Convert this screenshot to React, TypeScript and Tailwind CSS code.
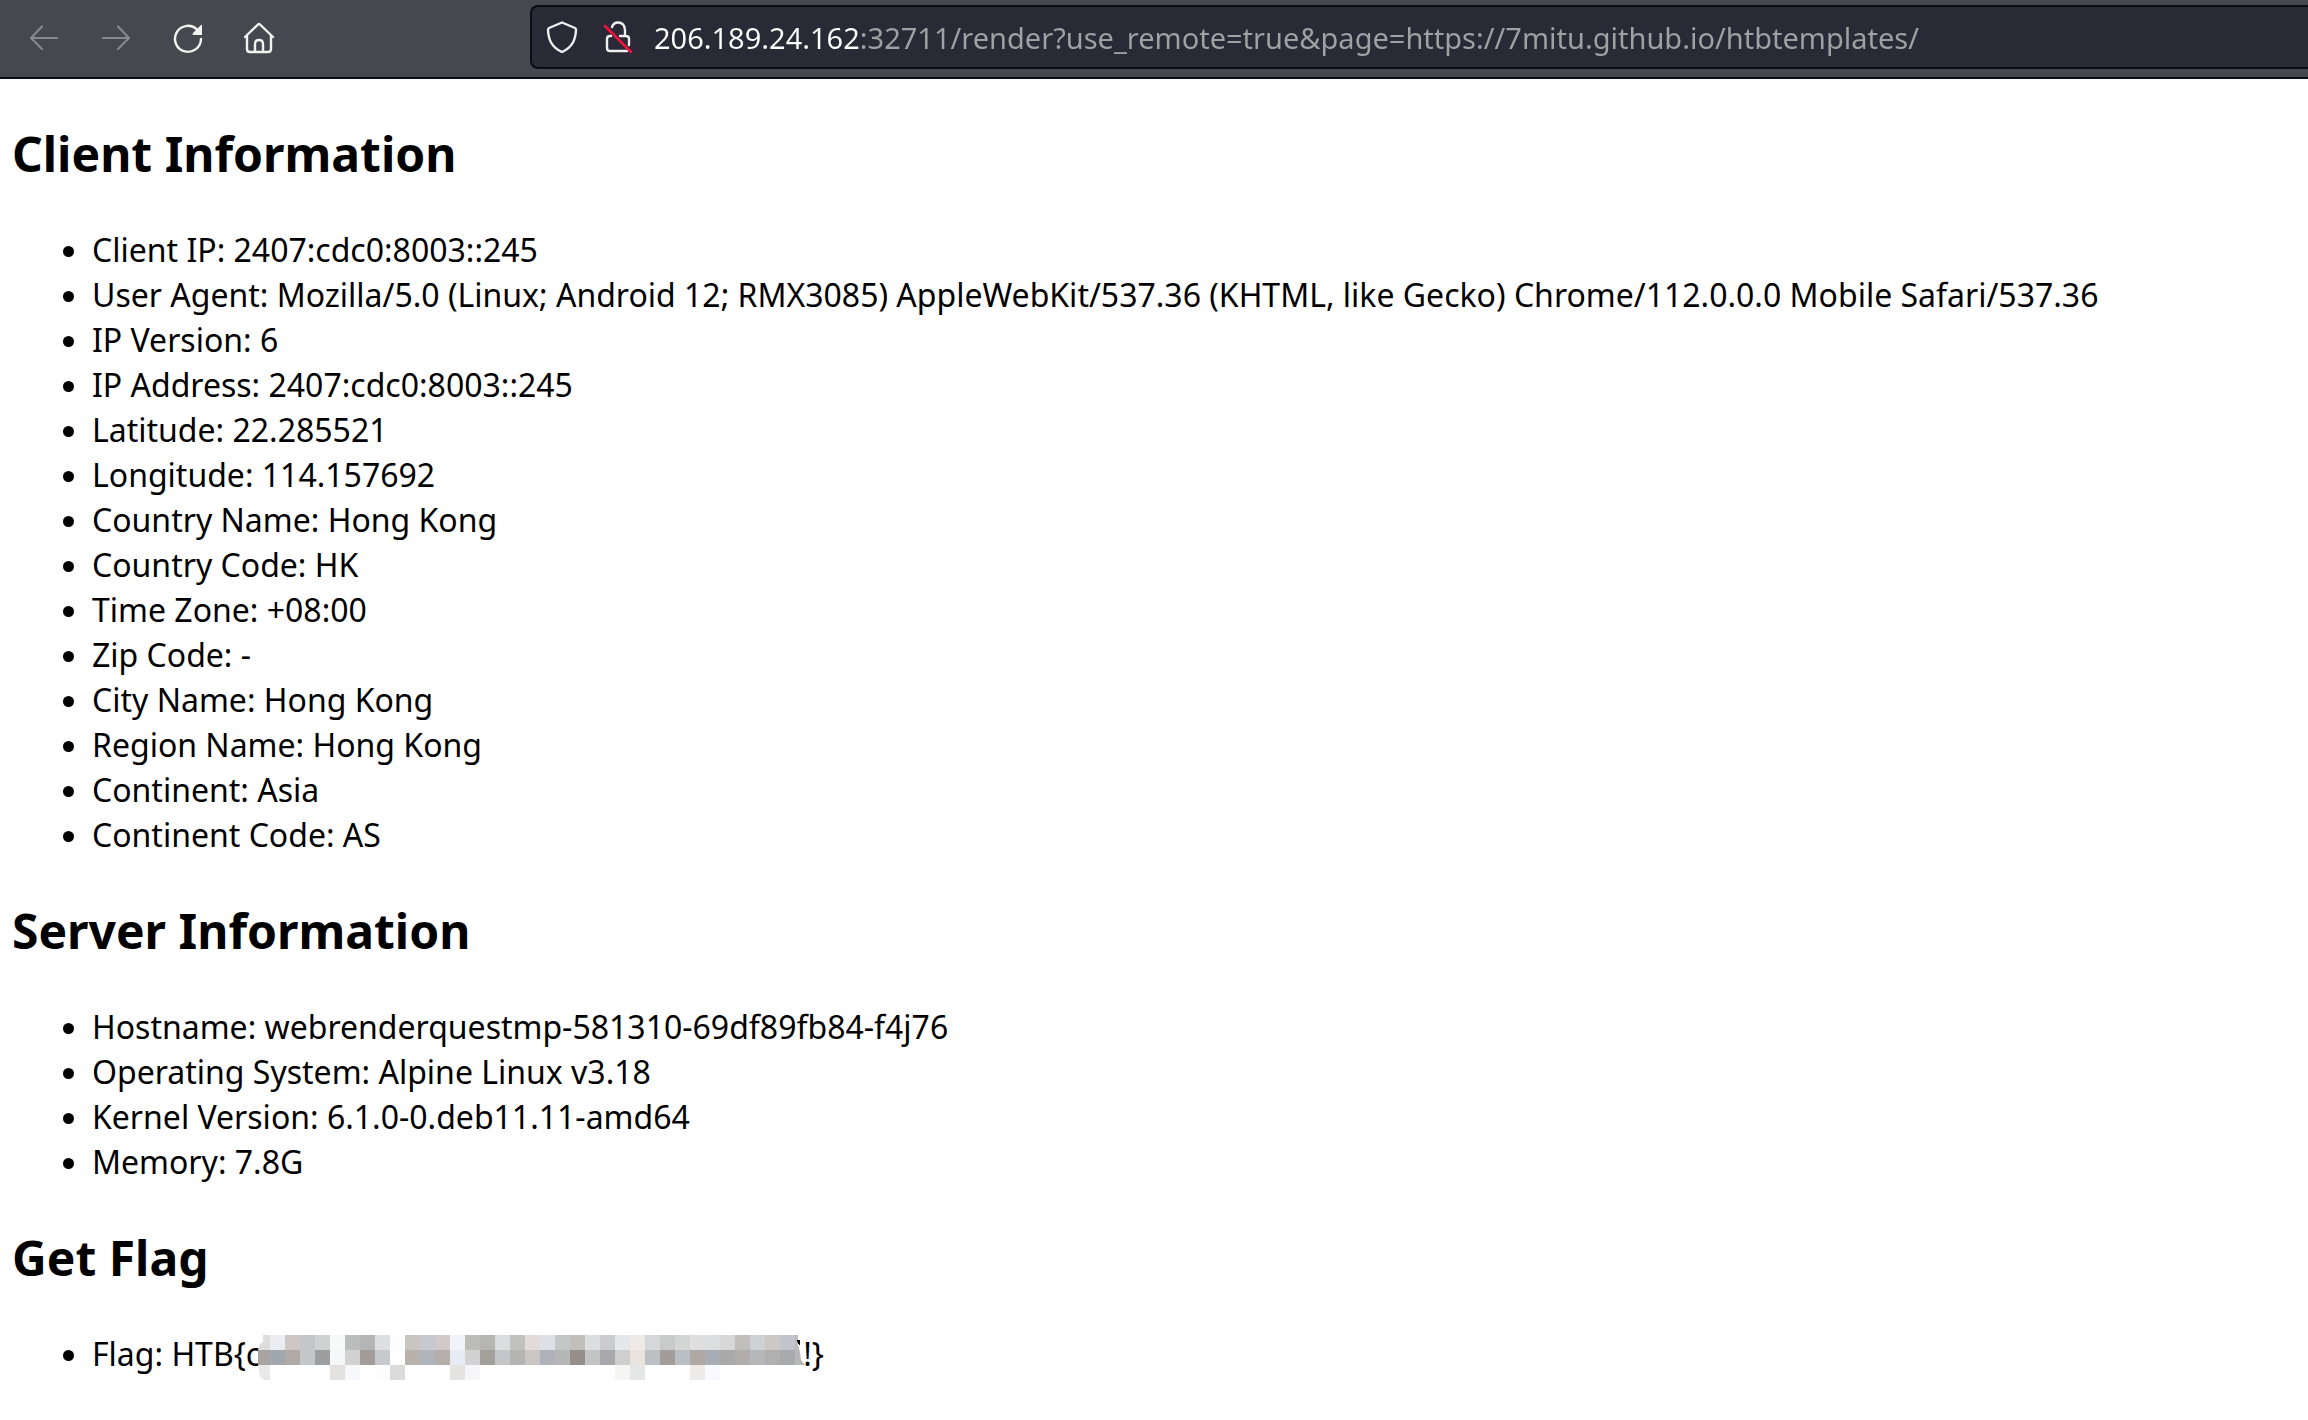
import React from "react";

const clientInfo = [
  "Client IP: 2407:cdc0:8003::245",
  "User Agent: Mozilla/5.0 (Linux; Android 12; RMX3085) AppleWebKit/537.36 (KHTML, like Gecko) Chrome/112.0.0.0 Mobile Safari/537.36",
  "IP Version: 6",
  "IP Address: 2407:cdc0:8003::245",
  "Latitude: 22.285521",
  "Longitude: 114.157692",
  "Country Name: Hong Kong",
  "Country Code: HK",
  "Time Zone: +08:00",
  "Zip Code: -",
  "City Name: Hong Kong",
  "Region Name: Hong Kong",
  "Continent: Asia",
  "Continent Code: AS",
];

const serverInfo = [
  "Hostname: webrenderquestmp-581310-69df89fb84-f4j76",
  "Operating System: Alpine Linux v3.18",
  "Kernel Version: 6.1.0-0.deb11.11-amd64",
  "Memory: 7.8G",
];

const mosaicRows = [
  "dddddd ecedf0 cdc8c5 c4c6c8 d0d2d1 f7f9f9 bbbcbc b5b5b5 dddfe2 fdfdfd c9c5c0 c6c9cf d0cac8 f0f4f9 bcbcba b5b5b3 dcdddf c1c2c0 e1dcd9 dfe0e5 c4c6c8 c2beba dadedf cbccce e5e7e8 eeeae8 d5d7d8 c9caca d3d4d4 dfdfdf dddee0 d7d8d7 c0bfbc cfd1d3 cbc8c5 c2c5cc bababa",
  "a9a49f a1a8ad b1aba8 c5c6c8 9d9ea0 f4f8fb d2d2d2 a39c98 c6cacd ffffff b8b1ac afb5ba b5afac e7ebf3 d2d2d2 a39f9b c3c7ca b4b4b3 cac6c3 afb2b9 b5b7b6 968e8b c2c5c4 a7a7ac cfcfcf eae4df bdc1c4 a29d98 babfc3 aeaaa3 a8acb5 a9a9a9 b1adaa b5b8bb b0b0b0 a9aaac b8b8b8",
  "e8e8e8 - - - - e3e2e0 f7f8fb - fdfdfd dbdbdb - - - e4e3e1 f7f7f9 - - - - - - - - - f5f5f4 e4e6e8 - - - efebe8 f9faff - - - - - -",
].map((row) => row.split(" "));

function Mosaic() {
  return (
    <svg
      role="img"
      aria-label="Redacted"
      viewBox="3 0 547 45"
      className="-ml-[3px] -mr-0.5 mt-1 h-[45px] w-[547px] shrink-0"
      shapeRendering="crispEdges"
    >
      <clipPath id="mosaic-edge">
        <path d="M8 0H543V10L545 17L546 25L550 30V45H9L5 42L3 30V15L5 9L8 7Z" />
      </clipPath>
      <g clipPath="url(#mosaic-edge)">
        {mosaicRows.map((row, y) =>
          row.map((c, x) =>
            c === "-" ? null : (
              <rect key={`${x}-${y}`} x={x * 15} y={y * 15} width="15" height="15" fill={"#" + c} />
            )
          )
        )}
      </g>
      <path d="M542 5H545V11L543 9Z" fill="#000" />
    </svg>
  );
}

function Section({ title, children }: { title: string; children: React.ReactNode }) {
  return (
    <section>
      <h2 className="mb-10 text-[48px] leading-[67px] font-bold">{title}</h2>
      <ul className="list-disc pl-20 text-[32px] leading-[45px]">{children}</ul>
    </section>
  );
}

const iconButton = "flex size-8 items-center justify-center";

export default function App() {
  return (
    <div className="min-h-screen bg-white text-black [font-family:'Noto_Sans',sans-serif]">
      <header className="flex items-center border-b-2 border-[#0c0c12] bg-[#45484f] pt-[5px] pb-2 pl-7">
        <nav aria-label="Browser" className="flex w-[502px] gap-10 pt-0.5 text-[#f2f2ee]">
          <button aria-label="Back" className={iconButton + " text-[#87898d]"}>
            <svg viewBox="0 0 32 32" className="size-8" fill="none" stroke="currentColor" strokeWidth="2.2" strokeLinecap="round" strokeLinejoin="round">
              <path d="M29 16H3M14 4.500L3 16L14 27" />
            </svg>
          </button>
          <button aria-label="Forward" className={iconButton + " text-[#87898d]"}>
            <svg viewBox="0 0 32 32" className="size-8" fill="none" stroke="currentColor" strokeWidth="2.2" strokeLinecap="round" strokeLinejoin="round">
              <path d="M3 16H29M18 4.500L29 16L18 27" />
            </svg>
          </button>
          <button aria-label="Reload" className={iconButton}>
            <svg viewBox="0 0 32 32" className="size-8" fill="none" stroke="currentColor" strokeWidth="2.4" strokeLinecap="round">
              <path d="M29 17A13 13 0 1 1 24.500 7" />
              <path d="M30 3V13H21Q20 12 21 11L29 3Z" fill="currentColor" stroke="none" />
            </svg>
          </button>
          <button aria-label="Home" className={iconButton}>
            <svg viewBox="0 0 32 32" className="size-8" fill="none" stroke="currentColor" strokeWidth="2.4" strokeLinecap="round" strokeLinejoin="round">
              <path d="M1 15L14 2.500Q15 1.500 16 2.500L29 15M3 14V27Q3 30 6 30H24Q27 30 27 27V14M11 30V22Q11 18 15 18T19 22V30" />
            </svg>
          </button>
        </nav>
        <div className="flex h-16 min-w-0 flex-1 items-center rounded-l-lg border-2 border-r-0 border-[#0c0c12] bg-[#292a35] pl-[14px] text-[#f0f0f0]">
          <button aria-label="Tracking protection" className={iconButton}>
            <svg viewBox="0 0 32 32" className="size-8" fill="none" stroke="currentColor" strokeWidth="2.4" strokeLinejoin="round">
              <path d="M16 1.500L29 7Q30 7.500 30 9C29.500 18 27 26 16 31C5 26 2.500 18 2 9Q2 7.500 3 7Z" />
            </svg>
          </button>
          <button aria-label="Connection not secure" className={iconButton + " ml-6"}>
            <svg viewBox="0 0 32 32" className="size-8" fill="none" stroke="currentColor" strokeWidth="2.4" strokeLinecap="round">
              <path d="M10 6C11 3 13 1.500 16 1.500Q22.500 1.500 23 9V15H24Q27 15 27 18V24M9 15H8Q5 15 5 18V27Q5 30 8 30H25M18 15H23" />
              <path d="M3 5L29 31" stroke="#f0123f" strokeWidth="2.6" />
            </svg>
          </button>
          <input
            aria-label="Address"
            type="text"
            defaultValue="206.189.24.162:32711/render?use_remote=true&page=https://7mitu.github.io/htbtemplates/"
            className="ml-5 h-14 min-w-0 flex-1 bg-linear-to-r from-white from-[207px] to-[#a1a1a3] to-[207px] bg-clip-text text-[29px] leading-[44px] text-transparent caret-white outline-none"
          />
        </div>
      </header>
      <main className="flex flex-col gap-10 px-3 pt-[41px] pb-8">
        <Section title="Client Information">
          {clientInfo.map((t) => (
            <li key={t}>{t}</li>
          ))}
        </Section>
        <Section title="Server Information">
          {serverInfo.map((t) => (
            <li key={t}>{t}</li>
          ))}
        </Section>
        <Section title="Get Flag">
          <li>
            <div className="flex">
              <span>Flag: HTB&#123;c</span>
              <Mosaic />
              <span>!&#125;</span>
            </div>
          </li>
        </Section>
      </main>
    </div>
  );
}
